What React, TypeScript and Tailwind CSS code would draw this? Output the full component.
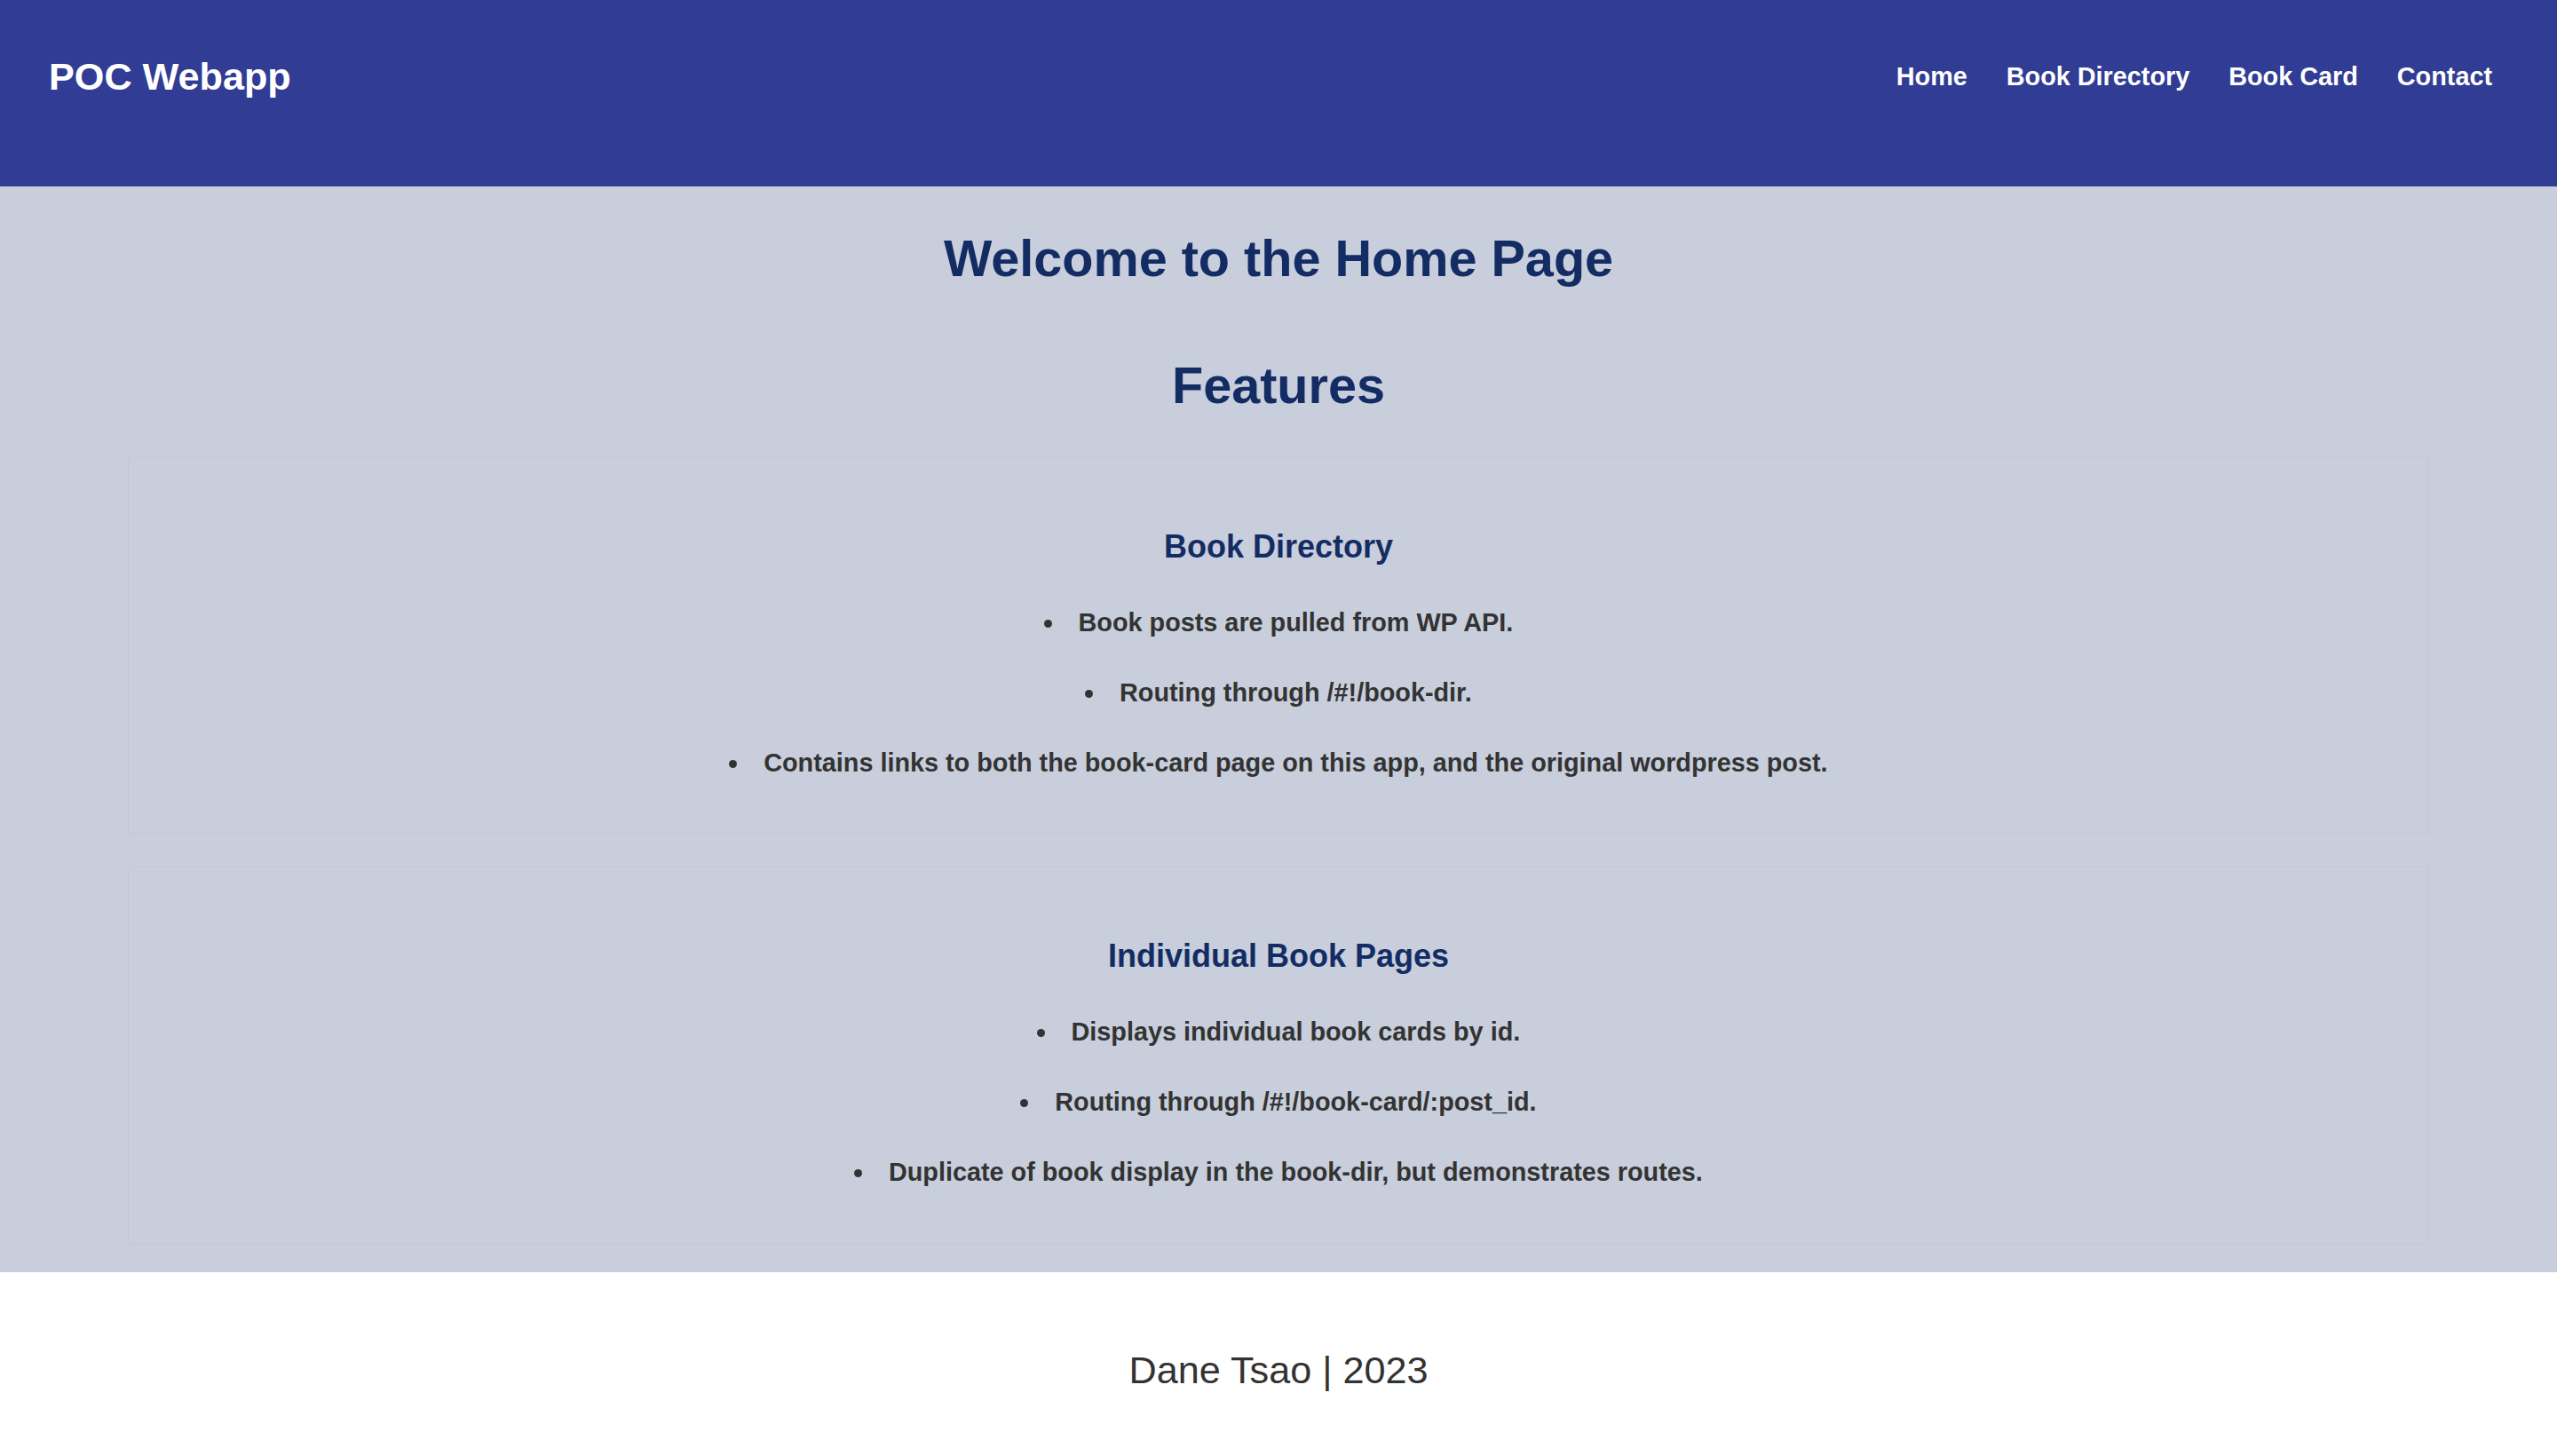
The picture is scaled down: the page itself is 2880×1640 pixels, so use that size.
import React from "react";

const navLinks = ["Home", "Book Directory", "Book Card", "Contact"];

const features = [
  {
    title: "Book Directory",
    items: [
      "Book posts are pulled from WP API.",
      "Routing through /#!/book-dir.",
      "Contains links to both the book-card page on this app, and the original wordpress post.",
    ],
  },
  {
    title: "Individual Book Pages",
    items: [
      "Displays individual book cards by id.",
      "Routing through /#!/book-card/:post_id.",
      "Duplicate of book display in the book-dir, but demonstrates routes.",
    ],
  },
];

const Header = () => (
  <header className="h-[210px] bg-[#313c94] pt-[61px] pl-[55px] pr-[73px]">
    <div className="flex h-[50px] items-center justify-between">
      <span className="text-[43.2px] leading-[50px] font-bold text-white">POC Webapp</span>
      <nav className="flex items-center gap-[44px]">
        {navLinks.map((link) => (
          <a key={link} href="#" className="text-[28.8px] leading-[34px] font-bold text-white">
            {link}
          </a>
        ))}
      </nav>
    </div>
  </header>
);

const FeatureBox = ({ title, items }: { title: string; items: string[] }) => (
  <section className="mx-auto w-[90%] border border-[#c5c8d0] pt-[80px] pb-[63px]">
    <h3 className="text-center text-[36px] leading-[40px] font-bold text-[#142c64]">{title}</h3>
    <ul className="mt-[48px] list-inside list-disc space-y-[45px] text-center text-[28.8px] leading-[34px] font-bold text-[#333]">
      {items.map((item) => (
        <li key={item}>{item}</li>
      ))}
    </ul>
  </section>
);

export default function App() {
  return (
    <div className="min-h-screen bg-white font-['Liberation_Sans',Arial,sans-serif]">
      <Header />
      <main className="bg-[#c8cedb] pt-[48px] pb-[32px]">
        <h1 className="text-center text-[57.6px] leading-[66px] font-bold text-[#142c64]">
          Welcome to the Home Page
        </h1>
        <h1 className="mt-[77px] text-center text-[57.6px] leading-[66px] font-bold text-[#142c64]">
          Features
        </h1>
        <div className="mt-[48px] flex flex-col gap-[36px]">
          {features.map((f) => (
            <FeatureBox key={f.title} title={f.title} items={f.items} />
          ))}
        </div>
      </main>
      <footer className="pt-[85px] pb-[72px] text-center">
        <p className="text-[43.2px] leading-[50px] text-[#333]">Dane Tsao | 2023</p>
      </footer>
    </div>
  );
}
